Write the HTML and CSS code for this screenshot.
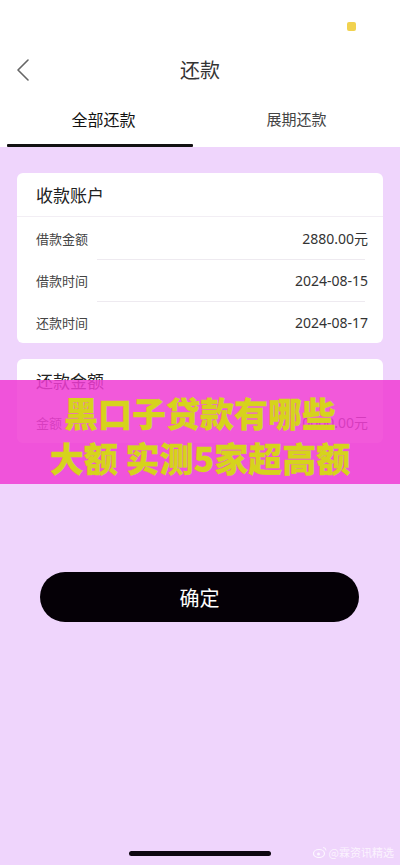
FILE: index.html
```html
<!DOCTYPE html>
<html lang="zh">
<head>
<meta charset="utf-8">
<link rel="stylesheet" href="styles.css">
</head>
<body>
<div class="screen">
  <header class="top">
    <div class="status"><span class="dot"></span></div>
    <div class="nav">
      <svg class="back" width="14" height="22" viewBox="0 0 14 22"><path d="M12 1 L2 11 L12 21" fill="none" stroke="#666" stroke-width="1.6" stroke-linecap="round" stroke-linejoin="round"/></svg>
      <div class="title">还款</div>
    </div>
    <div class="tabs">
      <div class="tab active">全部还款<span class="bar"></span></div>
      <div class="tab">展期还款</div>
    </div>
  </header>
  <main class="body">
    <section class="card">
      <div class="card-head">收款账户</div>
      <div class="row"><span class="label">借款金额</span><span class="value">2880.00元</span></div>
      <div class="row sep"><span class="label">借款时间</span><span class="value">2024-08-15</span></div>
      <div class="row sep"><span class="label">还款时间</span><span class="value">2024-08-17</span></div>
    </section>
    <section class="card card2">
      <div class="card-head plain">还款金额</div>
      <div class="row"><span class="label">金额</span><span class="value">0000.00元</span></div>
    </section>
    <button class="confirm">确定</button>
    <div class="spacer"></div>
    <div class="home"></div>
    <div class="watermark">
      <svg width="14" height="12" viewBox="0 0 14 12"><ellipse cx="6" cy="7.5" rx="5.5" ry="4" fill="none" stroke="rgba(255,255,255,0.8)" stroke-width="1.2"/><circle cx="5.5" cy="8" r="1.5" fill="rgba(255,255,255,0.8)"/><path d="M10 1.5 A3 3 0 0 1 13 4.5" fill="none" stroke="rgba(255,255,255,0.8)" stroke-width="1"/></svg>
      <span>@霖资讯精选</span>
    </div>
  </main>
  <div class="banner">
    <div class="line1">黑口子贷款有哪些</div>
    <div class="line2">大额 实测5家超高额</div>
  </div>
</div>
</body>
</html>
```
FILE: styles.css
```css
* { box-sizing: border-box; }
html, body { margin: 0; padding: 0; }
body {
  width: 400px;
  height: 865px;
  overflow: hidden;
  font-family: "Noto Sans CJK SC", "Noto Sans", sans-serif;
  background: #efd5fc;
}
.screen {
  position: relative;
  width: 400px;
  height: 865px;
  display: flex;
  flex-direction: column;
}
.top {
  background: #fff;
  flex: none;
}
.status {
  height: 46px;
  display: flex;
  justify-content: flex-end;
  padding: 22px 44px 0 0;
}
.dot {
  width: 9px;
  height: 9px;
  border-radius: 2px;
  background: #f1d24f;
}
.nav {
  height: 48px;
  display: flex;
  align-items: center;
  justify-content: center;
  position: relative;
}
.back {
  position: absolute;
  left: 16px;
  top: 13px;
}
.title {
  font-size: 20px;
  color: #333;
  line-height: 1;
}
.tabs {
  height: 53px;
  display: flex;
  padding: 0 7px;
}
.tab {
  flex: 1;
  display: flex;
  align-items: center;
  justify-content: center;
  font-size: 15px;
  color: #444;
  position: relative;
  padding-bottom: 4px;
}
.tab.active {
  font-size: 16px;
  color: #111;
}
.bar {
  position: absolute;
  left: 0;
  right: 7px;
  bottom: 0;
  height: 3px;
  background: #111;
  border-radius: 1px;
}
.body {
  flex: 1;
  display: flex;
  flex-direction: column;
  padding: 26px 17px 9px;
  position: relative;
}
.card {
  background: #fff;
  border-radius: 6px;
  overflow: hidden;
}
.card2 { margin-top: 16px; }
.card-head {
  height: 44px;
  display: flex;
  align-items: center;
  padding: 0 19px;
  font-size: 17px;
  color: #222;
  border-bottom: 1px solid #f2eef4;
}
.card-head.plain {
  height: 42px;
  border-bottom: none;
}
.row {
  height: 42px;
  display: flex;
  align-items: center;
  justify-content: space-between;
  padding: 0 15px 0 19px;
  position: relative;
}
.row.sep::before {
  content: "";
  position: absolute;
  top: 0;
  left: 80px;
  right: 18px;
  height: 1px;
  background: #eeeaf0;
}
.label {
  font-size: 13px;
  color: #444;
}
.value {
  font-size: 14px;
  color: #333;
  font-family: "Noto Sans", "Noto Sans CJK SC", sans-serif;
}
.confirm {
  margin: 129px 24px 0 23px;
  height: 50px;
  border: none;
  border-radius: 25px;
  background: #050006;
  color: #fff;
  font-family: "Noto Sans CJK SC", sans-serif;
  font-size: 20px;
  padding: 0;
}
.spacer { flex: 1; }
.home {
  align-self: center;
  width: 142px;
  height: 5px;
  border-radius: 3px;
  background: #0d0710;
}
.watermark {
  position: absolute;
  right: 6px;
  bottom: 5px;
  display: flex;
  align-items: center;
  gap: 2px;
  font-size: 11px;
  color: rgba(255,255,255,0.75);
}
.banner {
  position: absolute;
  left: 0;
  right: 0;
  top: 380px;
  height: 104px;
  padding-top: 5px;
  background: rgba(240, 62, 212, 0.86);
  display: flex;
  flex-direction: column;
  align-items: center;
  justify-content: center;
  color: #d6d31c;
  font-weight: 900;
  line-height: 45px;
  font-size: 34px;
  -webkit-text-stroke: 0.3px #d6d31c;
}
```
